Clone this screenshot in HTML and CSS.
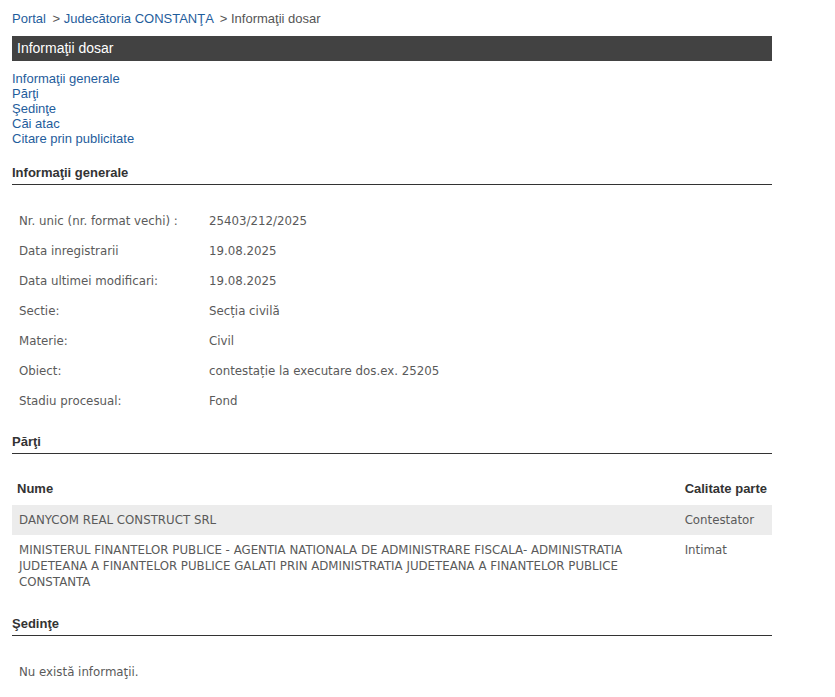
FILE: index.html
```html
<!DOCTYPE html>
<html lang="ro">
<head>
<meta charset="utf-8">
<title>Informaţii dosar</title>
<link rel="stylesheet" href="styles.css">
</head>
<body>
<div class="page">
  <div class="crumbs"><a href="#">Portal</a> <span class="sep">&gt;</span> <a href="#">Judecătoria CONSTANŢA</a> <span class="sep">&gt;</span> <span class="cur">Informaţii dosar</span></div>
  <div class="bar">Informaţii dosar</div>
  <ul class="toc">
    <li><a href="#">Informaţii generale</a></li>
    <li><a href="#">Părţi</a></li>
    <li><a href="#">Şedinţe</a></li>
    <li><a href="#">Căi atac</a></li>
    <li><a href="#">Citare prin publicitate</a></li>
  </ul>

  <h2 class="sec first">Informaţii generale</h2>
  <table class="info">
    <tr><td class="lbl">Nr. unic (nr. format vechi) :</td><td>25403/212/2025</td></tr>
    <tr><td class="lbl">Data inregistrarii</td><td>19.08.2025</td></tr>
    <tr><td class="lbl">Data ultimei modificari:</td><td>19.08.2025</td></tr>
    <tr><td class="lbl">Sectie:</td><td>Secția civilă</td></tr>
    <tr><td class="lbl">Materie:</td><td>Civil</td></tr>
    <tr><td class="lbl">Obiect:</td><td>contestație la executare dos.ex. 25205</td></tr>
    <tr><td class="lbl">Stadiu procesual:</td><td>Fond</td></tr>
  </table>

  <h2 class="sec after-info">Părţi</h2>
  <table class="parti">
    <thead>
      <tr><th>Nume</th><th class="col2">Calitate parte</th></tr>
    </thead>
    <tbody>
      <tr class="alt"><td>DANYCOM REAL CONSTRUCT SRL</td><td>Contestator</td></tr>
      <tr><td>MINISTERUL FINANTELOR PUBLICE - AGENTIA NATIONALA DE ADMINISTRARE FISCALA- ADMINISTRATIA JUDETEANA A FINANTELOR PUBLICE GALATI PRIN ADMINISTRATIA JUDETEANA A FINANTELOR PUBLICE CONSTANTA</td><td>Intimat</td></tr>
    </tbody>
  </table>

  <h2 class="sec">Şedinţe</h2>
  <p class="empty">Nu există informaţii.</p>
</div>
</body>
</html>
```
FILE: styles.css
```css
html, body {
  margin: 0;
  padding: 0;
  background: #fff;
}
body {
  font-family: "Liberation Sans", Arial, sans-serif;
  font-size: 13px;
  color: #555;
}
.page {
  width: 760px;
  padding: 11px 12px 0 12px;
}
a {
  color: #1f5d9c;
  text-decoration: none;
}
.crumbs {
  line-height: 15px;
  color: #555;
}
.crumbs .sep {
  margin: 0 0 0 3px;
}
.bar {
  margin-top: 10px;
  height: 25px;
  line-height: 24px;
  background: #424242;
  color: #fff;
  font-size: 14px;
  padding-left: 5px;
}
.toc {
  list-style: none;
  margin: 10px 0 0 0;
  padding: 0;
  line-height: 15px;
}
.sec {
  margin: 19px 0 0 0;
  font-size: 13px;
  font-weight: bold;
  color: #333;
  line-height: 15px;
  padding-bottom: 4px;
  border-bottom: 1px solid #333;
}
.sec.after-info {
  margin-top: 18px;
}
.info, .parti {
  width: 100%;
  border-collapse: collapse;
  font-family: "DejaVu Sans", sans-serif;
  font-size: 11.8px;
  color: #5a5a5a;
}
.info {
  margin-top: 21px;
}
.info td {
  height: 30px;
  padding: 0 7px;
  vertical-align: middle;
}
.info td.lbl {
  width: 176px;
}
.parti {
  margin-top: 18px;
}
.parti th {
  font-family: "Liberation Sans", Arial, sans-serif;
  font-size: 13px;
  font-weight: bold;
  color: #333;
  text-align: left;
  height: 33px;
  padding: 0 5px;
  vertical-align: middle;
}
.parti th.col2 {
  width: 1px;
  white-space: nowrap;
  padding: 0 5px 0 7px;
}
.parti td {
  padding: 7px 7px;
  line-height: 16px;
  vertical-align: top;
}
.parti tr.alt td {
  background: #ececec;
}
.empty {
  margin: 28px 0 0 7px;
  font-family: "DejaVu Sans", sans-serif;
  font-size: 11.8px;
  color: #5a5a5a;
  line-height: 16px;
}
```
